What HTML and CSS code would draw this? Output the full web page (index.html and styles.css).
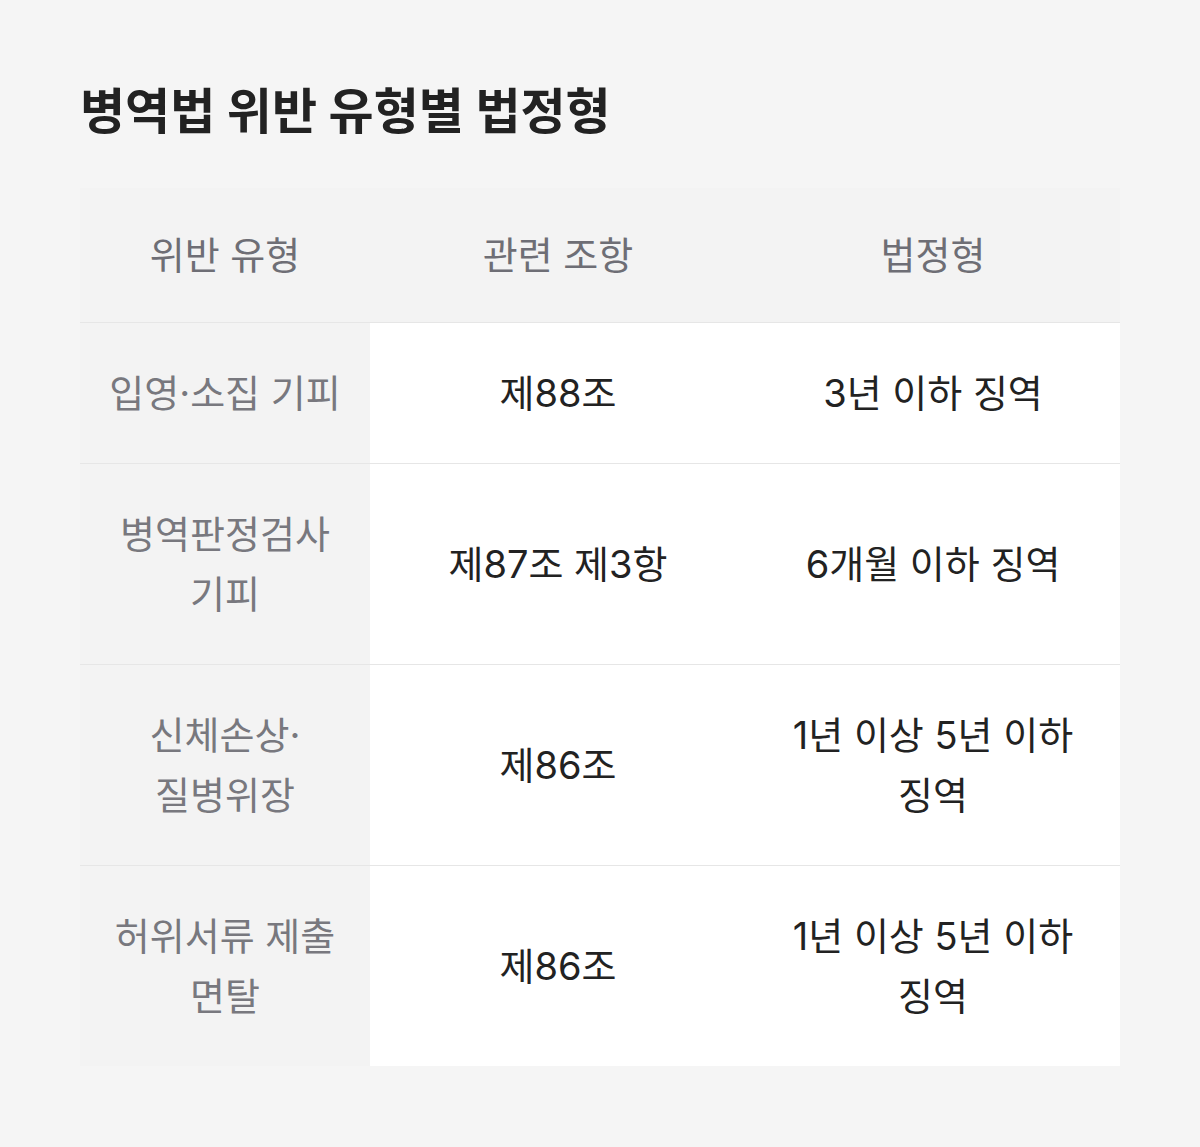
FILE: index.html
```html
<!DOCTYPE html>
<html lang="ko">
<head>
<meta charset="utf-8">
<link rel="stylesheet" href="styles.css">
</head>
<body>
<main class="page">
  <h1 class="title">병역법 위반 유형별 법정형</h1>
  <table class="law-table">
    <colgroup>
      <col class="c1"><col class="c2"><col class="c3">
    </colgroup>
    <thead>
      <tr><th>위반 유형</th><th>관련 조항</th><th>법정형</th></tr>
    </thead>
    <tbody>
      <tr><td class="type">입영·소집 기피</td><td>제88조</td><td>3년 이하 징역</td></tr>
      <tr><td class="type">병역판정검사 기피</td><td>제87조 제3항</td><td>6개월 이하 징역</td></tr>
      <tr><td class="type">신체손상·질병위장</td><td>제86조</td><td>1년 이상 5년 이하 징역</td></tr>
      <tr><td class="type">허위서류 제출 면탈</td><td>제86조</td><td>1년 이상 5년 이하 징역</td></tr>
    </tbody>
  </table>
</main>
</body>
</html>
```
FILE: styles.css
```css
html, body {
  margin: 0;
  padding: 0;
  background: #f5f5f5;
}
body {
  font-family: Inter, "Noto Sans CJK KR", "Noto Sans", sans-serif;
  color: #222222;
}
.page {
  padding: 82px 80px 0 80px;
}
.title {
  margin: 0 0 46px 0;
  font-size: 49px;
  font-weight: 700;
  line-height: 60px;
  color: #222222;
}
.law-table {
  width: 1040px;
  border-collapse: collapse;
  table-layout: fixed;
  word-break: keep-all;
}
.c1 { width: 290px; }
.c2 { width: 376px; }
.c3 { width: 374px; }
.law-table th {
  background: #f3f3f3;
  font-weight: 400;
  font-size: 38px;
  line-height: 60px;
  color: #6e6e75;
  padding: 37px 24px;
  text-align: center;
}
.law-table td {
  background: #ffffff;
  font-size: 38px;
  line-height: 60px;
  padding: 40px 24px;
  text-align: center;
  color: #222222;
  border-top: 1px solid #e6e6e6;
}
.law-table td.type {
  background: #f3f3f3;
  color: #78787e;
}
```
